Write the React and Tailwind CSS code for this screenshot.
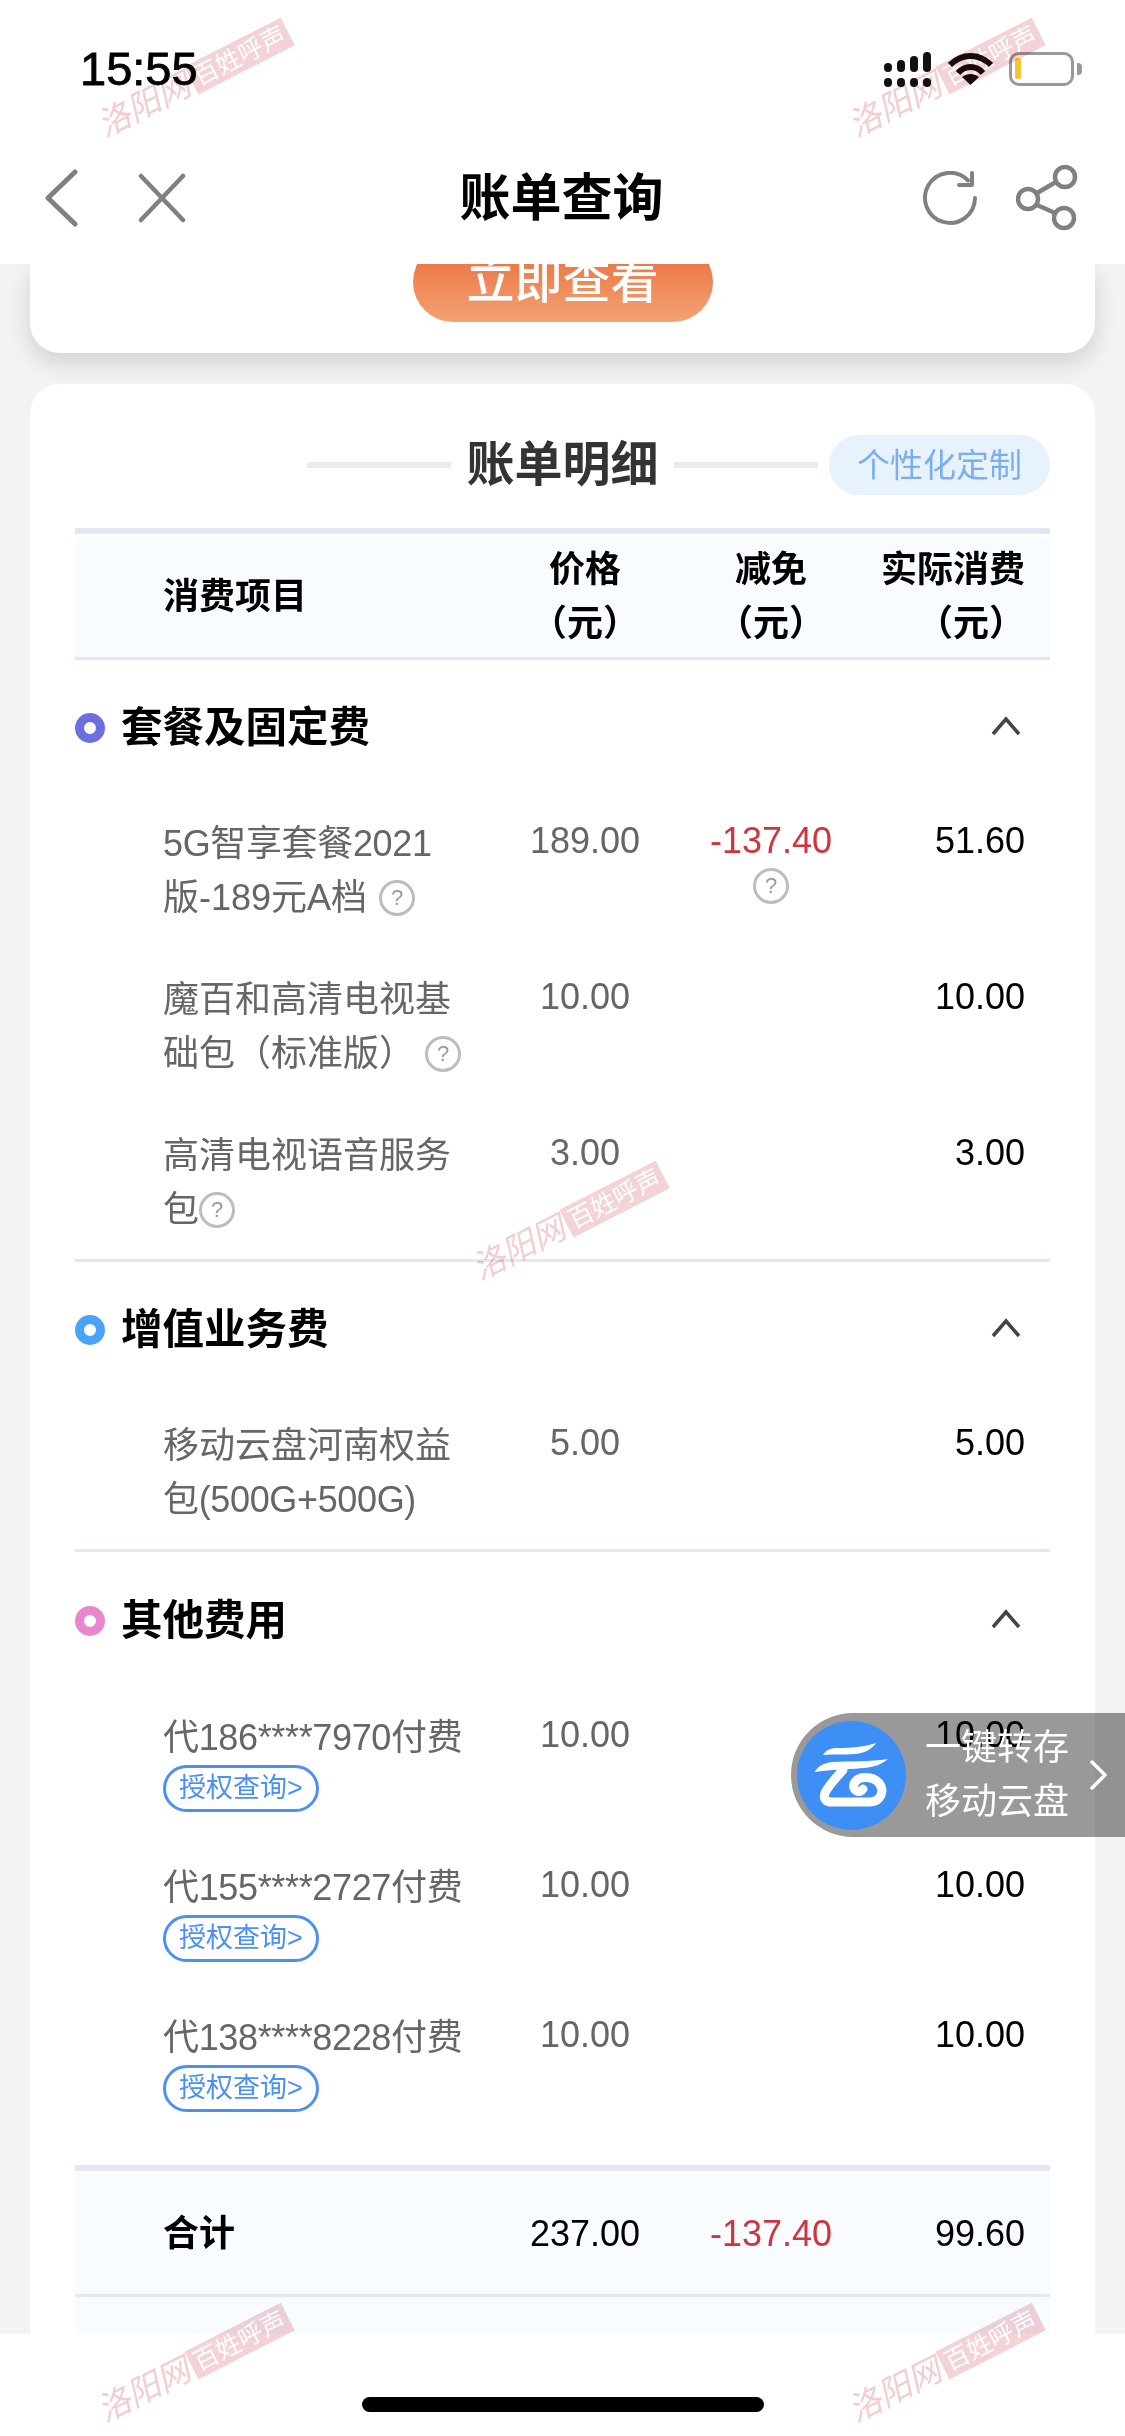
import React from 'react';

const sections = [
  {
    title: '套餐及固定费',
    dot: 'border-[#6b6fe0]',
    head: 'h-[131px]',
    rows: [
      { lines: ['5G智享套餐2021', '版-189元A档'], hint: 'ml-[12px]', price: '189.00', discount: '-137.40', discountHint: true, actual: '51.60' },
      { lines: ['魔百和高清电视基', '础包（标准版）'], hint: 'ml-[10px]', price: '10.00', actual: '10.00' },
      { lines: ['高清电视语音服务', '包'], hint: 'ml-0', price: '3.00', actual: '3.00' },
    ],
  },
  {
    title: '增值业务费',
    dot: 'border-[#4aa3f8]',
    head: 'h-[131px]',
    rows: [{ lines: ['移动云盘河南权益', '包(500G+500G)'], price: '5.00', actual: '5.00' }],
  },
  {
    title: '其他费用',
    dot: 'border-[#e887cf]',
    head: 'h-[133px]',
    last: true,
    rows: [
      { lines: ['代186****7970付费'], auth: true, price: '10.00', actual: '10.00' },
      { lines: ['代155****2727付费'], auth: true, price: '10.00', actual: '10.00' },
      { lines: ['代138****8228付费'], auth: true, price: '10.00', actual: '10.00' },
    ],
  },
];

const COLS = 'grid grid-cols-[430px_160px_212px_172px]';

const HelpIcon = ({ className = '' }) => (
  <span className={`inline-flex h-[36px] w-[36px] shrink-0 items-center justify-center rounded-full border-[3px] border-[#bdbdbd] text-[22px] leading-none text-[#999] ${className}`}>
    ?
  </span>
);

// faint site stamp that sits over the screenshot
const Watermark = ({ className }) => (
  <div className={`pointer-events-none absolute z-30 flex h-[36px] w-[215px] -rotate-[27deg] items-center justify-center whitespace-nowrap mix-blend-multiply ${className}`}>
    <span className="text-[33px] italic leading-none text-[#f4cdd0]">洛阳网</span>
    <span className="ml-[4px] bg-[#f3d3d6] px-[4px] py-[3px] text-[25px] leading-none text-white">百姓呼声</span>
  </div>
);

const StatusIcons = () => (
  <div className="flex items-start">
    <svg width="47" height="35" viewBox="0 0 47 35" fill="#111">
      <rect x="0" y="26" width="8" height="9" rx="4" />
      <rect x="13" y="26" width="8" height="9" rx="4" />
      <rect x="26" y="26" width="8" height="9" rx="4" />
      <rect x="39" y="26" width="8" height="9" rx="4" />
      <rect x="0" y="11" width="8" height="9" rx="4" />
      <rect x="13" y="8" width="8" height="12" rx="4" />
      <rect x="26" y="4" width="8" height="16" rx="4" />
      <rect x="39" y="0" width="8" height="20" rx="4" />
    </svg>
    <svg className="ml-[17px]" width="45" height="33" viewBox="0 0 45 33" fill="none" stroke="#1a0a0a" strokeWidth="6">
      <path d="M2 13 C14 1 31 1 43 13" />
      <path d="M10 21 C17 13 28 13 35 21" />
      <path d="M22.500 33 L14 25 C19 21 26 21 31 25 Z" fill="#1a0a0a" stroke="none" />
    </svg>
    <div className="relative ml-[16px] h-[34px] w-[65px] rounded-[10px] border-[3px] border-[#999] pl-[3px] pt-[3px]">
      <div className="h-[21px] w-[6px] rounded-[2px] bg-[#f7c235]" />
      <div className="absolute -right-[11px] top-[8px] h-[12px] w-[5px] rounded-r-[4px] bg-[#999]" />
    </div>
  </div>
);

const NavBar = () => (
  <header className="relative z-20 h-[264px] shrink-0 bg-white">
    <div className="flex h-[152px] items-start justify-between pl-[80px] pr-[51px] pt-[52px]">
      <span className="text-[47px] leading-[34px] text-black [-webkit-text-stroke:0.8px_black]">15:55</span>
      <StatusIcons />
    </div>
    <div className="flex h-[92px] items-center justify-between pl-[45px] pr-[47px]">
      <div className="flex w-[240px] items-center gap-[59px]">
        <svg width="33" height="58" viewBox="0 0 33 58" fill="none" stroke="#808080" strokeWidth="5" strokeLinecap="round" strokeLinejoin="round">
          <path d="M30 3 L3 29 L30 55" />
        </svg>
        <svg width="50" height="50" viewBox="0 0 50 50" fill="none" stroke="#808080" strokeWidth="4.500" strokeLinecap="round">
          <path d="M4 3 L46 47 M46 3 L4 47" />
        </svg>
      </div>
      <h1 className="text-[51px] font-bold leading-none text-black">账单查询</h1>
      <div className="flex w-[240px] items-center justify-end gap-[39px]">
        <svg width="54" height="54" viewBox="0 0 54 54" fill="none" stroke="#808080" strokeWidth="4" strokeLinecap="round" strokeLinejoin="round">
          <path d="M52 27 A25 25 0 1 1 45 9.500" />
          <path d="M49 2 L49 14 L36 14" />
        </svg>
        <svg width="62" height="66" viewBox="0 0 62 66" fill="none" stroke="#808080" strokeWidth="4.500">
          <circle cx="12" cy="34" r="10" />
          <circle cx="49" cy="12" r="10" />
          <circle cx="48" cy="53" r="10" />
          <path d="M21 28 L40 17 M21 40 L39 48" />
        </svg>
      </div>
    </div>
  </header>
);

const TableRow = ({ row }) => (
  <div className={`${COLS} pb-[22px] pt-[23px] text-[36px] leading-[54px] text-[#666]`}>
    <div className="pl-[88px] pt-[3px]">
      {row.lines.map((line, i) => (
        <div key={line} className={`flex h-[54px] items-center whitespace-nowrap ${/\dG|\*/.test(line) ? 'tracking-[-0.35px]' : ''}`}>
          {line}
          {row.hint && i === row.lines.length - 1 && <HelpIcon className={row.hint} />}
        </div>
      ))}
      {row.auth && (
        <div className="h-[48px]">
          <span className="flex h-[47px] w-[156px] items-center justify-center rounded-full border-[3px] border-[#4a90f5] text-[27px] leading-none text-[#4a90f5]">
            授权查询&gt;
          </span>
        </div>
      )}
    </div>
    <div className="text-center">{row.price}</div>
    <div className="flex flex-col items-center">
      {row.discount && <span className="text-[#d0343f]">{row.discount}</span>}
      {row.discountHint && <HelpIcon />}
    </div>
    <div className="pr-[24px] text-right text-black">{row.actual}</div>
  </div>
);

const Section = ({ section }) => (
  <section className={section.last ? 'mb-[30px]' : 'border-b-[3px] border-[#e3e6f5]'}>
    <div className={`flex items-center justify-between ${section.head}`}>
      <div className="flex items-center gap-[16px] pt-[4px]">
        <span className={`h-[30px] w-[30px] rounded-full border-[9px] bg-white ${section.dot}`} />
        <span className="text-[41.500px] font-bold leading-none text-black">{section.title}</span>
      </div>
      <svg className="mr-[29px]" width="30" height="20" viewBox="0 0 30 20" fill="none" stroke="#444" strokeWidth="3.500">
        <path d="M2 18 L15 3 L28 18" />
      </svg>
    </div>
    {section.rows.map((row) => (
      <TableRow key={row.lines[0]} row={row} />
    ))}
  </section>
);

const CloudLogo = () => (
  <svg width="109" height="109" viewBox="0 0 109 109">
    <circle cx="54.500" cy="54.500" r="54.500" fill="#3d8ff5" />
    <path d="M26 34 C29 29 33 27 40 27 C54 27 68 26 79 22 C75 28 68 32 58 33 C46 34 36 33 26 34 Z" fill="#fff" />
    <path d="M17.500 51 C21 45 27 42 35 41 C52 40 72 41 91 38 C84 44 76 46 68 47 C56 48 40 48 17.500 51 Z" fill="#fff" />
    <path d="M46 49 C38 58 31 65 28 72 C26 78 29 81 35 81 L72 81 C84 81 88 70 82 62 C75 54 60 55 57 63 C55 70 63 73 66 68" fill="none" stroke="#fff" strokeWidth="9" strokeLinecap="round" />
  </svg>
);

const SaveToCloud = () => (
  <div className="absolute right-0 top-[1713px] z-10 flex h-[124px] w-[334px] items-center rounded-l-[62px] bg-black/40 pl-[6px]">
    <CloudLogo />
    <div className="ml-[19px] text-[36px] leading-[54px] text-white">
      <div>一键转存</div>
      <div>移动云盘</div>
    </div>
    <svg className="ml-[21px]" width="17" height="30" viewBox="0 0 17 30" fill="none" stroke="#fff" strokeWidth="3.500" strokeLinecap="round" strokeLinejoin="round">
      <path d="M2 2 L15 15 L2 28" />
    </svg>
  </div>
);

const App = () => {
  return (
    <div className="relative flex h-[2436px] w-[1125px] flex-col overflow-hidden bg-[#f3f3f3] font-['Liberation_Sans','Noto_Sans_CJK_SC',sans-serif]">
      <NavBar />

      <main className="flex min-h-0 flex-1 flex-col gap-[31px] overflow-hidden px-[30px]">
        {/* remainder of the card that has scrolled under the nav */}
        <div className="h-[89px] shrink-0 overflow-hidden rounded-b-[30px] bg-white shadow-[0_10px_24px_rgba(0,0,0,0.14)]">
          <button className="mx-auto -mt-[22px] flex h-[80px] w-[300px] items-center justify-center rounded-full bg-gradient-to-b from-[#e96a37] to-[#f4a273] text-[48px] font-medium leading-none text-white">
            立即查看
          </button>
        </div>

        <div className="shrink-0 rounded-t-[30px] bg-white px-[45px] pt-[51px]">
          <div className="mb-[33px] grid h-[60px] grid-cols-[1fr_auto_1fr] items-center">
            <div />
            <div className="flex items-center">
              <span className="h-[6px] w-[144px] bg-[#ebebeb]" />
              <h2 className="mx-[15px] text-[48px] font-bold leading-none text-[#333]">账单明细</h2>
              <span className="h-[6px] w-[144px] bg-[#ebebeb]" />
            </div>
            <div className="flex justify-end">
              <span className="flex h-[60px] w-[221px] items-center justify-center rounded-full bg-[#e8f2fd] text-[33px] leading-none text-[#7aaef0]">
                个性化定制
              </span>
            </div>
          </div>

          <div className="border-t-[6px] border-[#e3e6f5] pt-[3px]">
            <div className={`${COLS} h-[123px] items-center border-b-[3px] border-[#e3e6f5] bg-[#f8fbff] text-[36px] font-bold leading-[54px] text-black`}>
              <div className="pl-[88px]">消费项目</div>
              <div className="text-center">价格<br />（元）</div>
              <div className="text-center">减免<br />（元）</div>
              <div className="whitespace-nowrap pr-[24px] text-right">实际消费<br />（元）</div>
            </div>
          </div>

          {sections.map((section) => (
            <Section key={section.title} section={section} />
          ))}

          <div className="border-t-[6px] border-[#e3e6f5] pt-[3px]">
            <div className={`${COLS} h-[123px] items-center border-b-[3px] border-[#e3e6f5] bg-[#f8fbff] text-[36px] leading-[54px] text-black`}>
              <div className="pl-[88px] font-bold">合计</div>
              <div className="text-center">237.00</div>
              <div className="text-center text-[#d0343f]">-137.40</div>
              <div className="pr-[24px] text-right">99.60</div>
            </div>
            <div className="h-[60px] bg-[#f8fbff]" />
          </div>
        </div>
      </main>

      <footer className="relative z-20 flex h-[102px] shrink-0 items-start justify-center bg-white pt-[63px]">
        <div className="h-[15px] w-[402px] rounded-full bg-black" />
      </footer>

      <SaveToCloud />

      <Watermark className="left-[86px] top-[61px]" />
      <Watermark className="left-[837px] top-[61px]" />
      <Watermark className="left-[461px] top-[1204px]" />
      <Watermark className="left-[86px] top-[2346px]" />
      <Watermark className="left-[837px] top-[2346px]" />
    </div>
  );
};

export default App;
